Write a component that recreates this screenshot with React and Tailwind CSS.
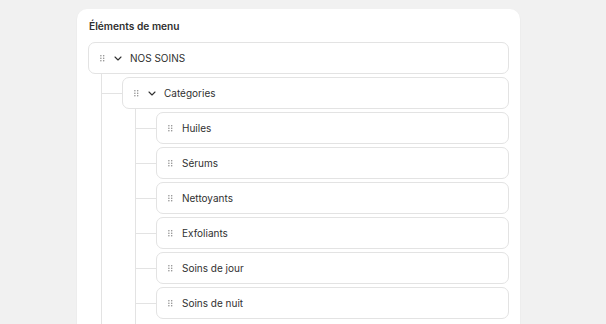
import React from 'react';

const subItems = ['Huiles', 'Sérums', 'Nettoyants', 'Exfoliants', 'Soins de jour', 'Soins de nuit'];

function Handle() {
  return (
    <svg width="5" height="7" viewBox="0 0 5 7" className="shrink-0 text-[#8a8a8a]">
      {[0.8, 3.3, 5.8].map((y) =>
        [0.9, 3.7].map((x) => <circle key={`${x}-${y}`} cx={x} cy={y} r="0.75" fill="currentColor" />)
      )}
    </svg>
  );
}

function Chevron() {
  return (
    <svg width="8" height="5" viewBox="0 0 8 5" className="shrink-0 text-[#303030]">
      <path d="M1 1 4 4 7 1" fill="none" stroke="currentColor" strokeWidth="1.1" strokeLinecap="round" strokeLinejoin="round" />
    </svg>
  );
}

function Row({ label, open }) {
  return (
    <div className="h-[32px] flex-1 flex items-center pl-[11px] rounded-[7px] border border-[#e3e3e3] bg-white">
      <Handle />
      {open ? (
        <>
          <span className="ml-[9px] flex"><Chevron /></span>
          <span className="ml-[8px]">{label}</span>
        </>
      ) : (
        <span className="ml-[9px]">{label}</span>
      )}
    </div>
  );
}

function Branch({ children }) {
  return (
    <div className="flex items-center">
      <div className="w-[20px] h-px bg-[#e3e3e3] shrink-0" />
      {children}
    </div>
  );
}

export default function App() {
  return (
    <div className="min-h-screen bg-[#f1f1f1] pt-[9px] text-[#303030]" style={{ fontFamily: 'Inter, "Liberation Sans", sans-serif' }}>
      <div className="ml-[77px] w-[443px] bg-white rounded-[10px] shadow-[0_1px_2px_rgba(0,0,0,0.07)] px-[11px] pt-[10px] pb-[20px]">
        <h2 className="text-[10.2px] font-semibold leading-[14px] ml-px">Éléments de menu</h2>
        <div className="mt-[9px] text-[10px]">
          <div className="flex"><Row label="NOS SOINS" open /></div>
          <div className="ml-[13px] border-l border-[#e3e3e3] pt-[3px]">
            <Branch><Row label="Catégories" open /></Branch>
            <div className="ml-[33px] border-l border-[#e3e3e3] pt-[3px] pb-[8px] flex flex-col gap-[3px]">
              {subItems.map((s) => (
                <Branch key={s}><Row label={s} /></Branch>
              ))}
            </div>
          </div>
        </div>
      </div>
    </div>
  );
}
